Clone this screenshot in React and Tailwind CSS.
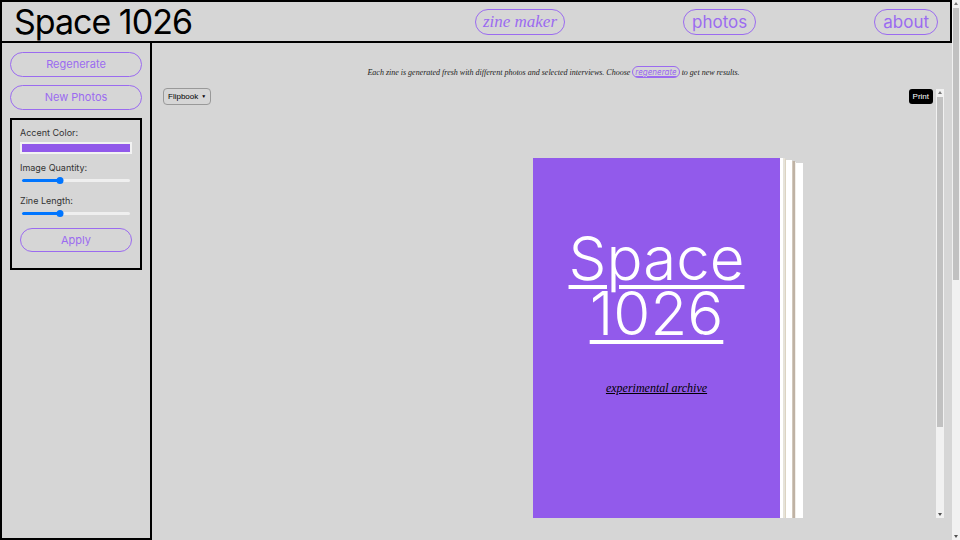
import React from 'react';

const sans = { fontFamily: 'Inter, "Noto Sans", sans-serif' };
const serif = { fontFamily: '"Liberation Serif", serif' };
const arial = { fontFamily: '"Liberation Sans", Arial, sans-serif' };

// page edges peeking out from behind the cover
const PageEdges = () => (
  <div className="flex h-[360px] items-start">
    <div className="h-full w-[3px] bg-white" />
    <div className="h-full w-[2px] bg-[#e6e3da]" />
    <div className="mt-[1px] h-full w-[1px] bg-[#dcd4c2]" />
    <div className="mt-[2px] h-full w-[6px] bg-white" />
    <div className="mt-[3px] h-full w-[1px] bg-[#d2c8bb]" />
    <div className="mt-[3px] h-full w-[2px] bg-[#bfb2a4]" />
    <div className="mt-[4px] h-full w-[1px] bg-[#f1eee9]" />
    <div className="mt-[5px] h-full w-[7px] bg-white" />
  </div>
);

// fake classic scrollbar (the screenshot shows them)
const Scrollbar = ({ thumbTop, thumbHeight }) => (
  <div className="relative h-full w-[8px] shrink-0 bg-[#f1f1f1]">
    <div className="absolute left-[2px] top-[2px] h-0 w-0 border-x-[2px] border-b-[3px] border-x-transparent border-b-[#777]" />
    <div
      className="absolute left-[1px] right-[1px] bg-[#c1c1c1]"
      style={{ top: thumbTop, height: thumbHeight }}
    />
    <div className="absolute bottom-[2px] left-[2px] h-0 w-0 border-x-[2px] border-t-[3px] border-x-transparent border-t-[#505050]" />
  </div>
);

const Slider = ({ pct }) => (
  <div className="relative mx-[2px] flex h-[10px] items-center">
    <div className="h-[3px] w-full rounded-full bg-[#efefef]" />
    <div className="absolute left-0 h-[3px] rounded-full bg-[#0075ff]" style={{ width: `${pct}%` }} />
    <div
      className="absolute h-[7px] w-[7px] -translate-x-1/2 rounded-full bg-[#0075ff]"
      style={{ left: `${pct}%` }}
    />
  </div>
);

const Pill = ({ children, className = '', style }) => (
  <button
    className={`rounded-full border-[1.5px] border-[#9b6bf0] text-[#9b6bf0] ${className}`}
    style={style}
  >
    {children}
  </button>
);

export default function App() {
  return (
    <div className="flex h-[540px] overflow-hidden bg-[#d6d6d6] text-black" style={sans}>
      <div className="w-[952px] shrink-0">
        {/* header */}
        <header className="flex h-[43px] items-center border-2 border-black pl-[12px] pr-[12px]">
          <h1 className="text-[34px] leading-none tracking-[-1px]">Space 1026</h1>
          <nav className="ml-auto flex items-center gap-[118px]">
            <Pill className="px-[7px] py-[3px] text-[17px] italic leading-[18px]" style={serif}>
              zine maker
            </Pill>
            <Pill className="px-[8px] py-[3px] text-[17px] leading-[18px]">photos</Pill>
            <Pill className="px-[8px] py-[3px] text-[17px] leading-[18px]">about</Pill>
          </nav>
        </header>

        <div className="flex items-start">
          {/* sidebar */}
          <aside className="flex h-[497px] w-[152px] shrink-0 flex-col gap-[8px] border-x-2 border-b-2 border-black px-[8px] pt-[9px]">
            <Pill className="h-[25px] w-full text-[11px]">Regenerate</Pill>
            <Pill className="h-[25px] w-full text-[11px]">New Photos</Pill>
            <div className="flex flex-col border-2 border-black px-[8px] pb-[16px] pt-[7px] text-[9px] leading-[11px] text-[#333]">
              <label>Accent Color:</label>
              <div className="mt-[4px] h-[12px] w-full border-2 border-[#f2f2f2] bg-[#9159ea]" />
              <label className="mt-[8px]">Image Quantity:</label>
              <div className="mt-[2px]">
                <Slider pct={35} />
              </div>
              <label className="mt-[10px]">Zine Length:</label>
              <div className="mt-[2px]">
                <Slider pct={35} />
              </div>
              <Pill className="mt-[10px] h-[24px] w-full text-[11px]">Apply</Pill>
            </div>
          </aside>

          {/* main */}
          <main className="flex-1 pl-[11px] pr-[8px]">
            <p className="mt-[23px] text-center text-[8px] italic leading-[12px] text-[#222]" style={serif}>
              Each zine is generated fresh with different photos and selected interviews. Choose{' '}
              <span
                className="rounded-full border-[1.5px] border-[#9b6bf0] px-[2px] text-[#9b6bf0] underline"
                style={sans}
              >
                regenerate
              </span>{' '}
              to get new results.
            </p>

            <div className="relative mt-[10px] flex h-[429px]">
              <div
                className="absolute left-0 top-[-1px] z-10 flex items-center gap-[3px] rounded-[4px] border border-[#999] bg-[#d6d6d6] px-[4px] py-[2px] text-[8px] leading-[11px]"
                style={arial}
              >
                Flipbook
                <span className="text-[5px]">▼</span>
              </div>
              <div
                className="absolute right-[11px] top-0 z-10 rounded-[3px] bg-black px-[4px] py-[2px] text-[8px] leading-[11px] text-white"
                style={arial}
              >
                Print
              </div>

              <div className="h-full flex-1 overflow-hidden">
                <div className="flex justify-center pr-[10px] pt-[69px]">
                  <div className="w-[247px]" />
                  <div className="flex h-[400px] w-[247px] flex-col items-center bg-[#925aeb] pt-[73px] text-white">
                    <h2 className="text-center text-[60px] font-light leading-[55px] underline decoration-[4px] underline-offset-[5px]">
                      Space
                      <br />
                      1026
                    </h2>
                    <p className="mt-[38px] text-[12px] italic text-black underline" style={serif}>
                      experimental archive
                    </p>
                  </div>
                  <PageEdges />
                </div>
              </div>
              <Scrollbar thumbTop={8} thumbHeight={330} />
            </div>
          </main>
        </div>
      </div>
      <Scrollbar thumbTop={8} thumbHeight={272} />
    </div>
  );
}
